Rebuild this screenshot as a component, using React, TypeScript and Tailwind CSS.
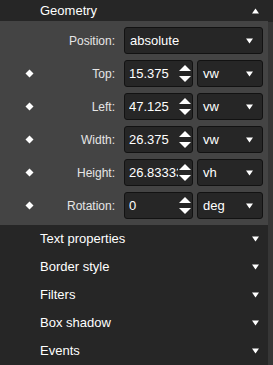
import React from "react";

const Up = () => (
  <svg width="7" height="6" viewBox="0 0 7 6">
    <path d="M3.5 0.5 L7 5.5 L0 5.5 Z" fill="#fff" />
  </svg>
);

const Down = () => (
  <svg width="7" height="6" viewBox="0 0 7 6">
    <path d="M0 0.5 L7 0.5 L3.5 5.5 Z" fill="#fff" />
  </svg>
);

const Diamond = () => (
  <svg width="9" height="9" viewBox="0 0 9 9">
    <path d="M4.5 0.5 L8.5 4.5 L4.5 8.5 L0.5 4.5 Z" fill="#fff" />
  </svg>
);

const Spin = () => (
  <div className="flex flex-col items-center gap-[5px] pr-[1px]">
    <svg width="12" height="6" viewBox="0 0 12 6">
      <path d="M6 0 L12 6 L0 6 Z" fill="#fff" />
    </svg>
    <svg width="12" height="6" viewBox="0 0 12 6">
      <path d="M0 0 L12 0 L6 6 Z" fill="#fff" />
    </svg>
  </div>
);

const boxCls =
  "h-[27px] flex items-center bg-[#262626] border border-[#121212] rounded-[3px] text-white text-[13px]";

const Select = ({ value, className }: { value: string; className: string }) => (
  <div className={`${boxCls} ${className} pl-[5px] pr-[9px] justify-between`}>
    <span>{value}</span>
    <Down />
  </div>
);

const fields = [
  { label: "Top:", value: "15.375", unit: "vw" },
  { label: "Left:", value: "47.125", unit: "vw" },
  { label: "Width:", value: "26.375", unit: "vw" },
  { label: "Height:", value: "26.83333", unit: "vh" },
  { label: "Rotation:", value: "0", unit: "deg" },
];

const sections = ["Text properties", "Border style", "Filters", "Box shadow", "Events"];

export default function App() {
  return (
    <div
      className="w-[273px] h-[365px] bg-[#262626] overflow-hidden flex"
      style={{ fontFamily: '"Liberation Sans", Arial, sans-serif' }}
    >
      <div className="w-[268px] flex flex-col">
        <div className="h-[22px] flex items-center justify-between pl-[40px] pr-[9px] pt-[1px]">
          <span className="text-white text-[13px]">Geometry</span>
          <Up />
        </div>
        <div className="bg-[#444444] flex flex-col gap-[6px] py-[6px]">
          <div className="flex items-center">
            <div className="w-[116px] text-right pr-[1px] text-[12px] text-[#e6e6e6]">Position:</div>
            <Select value="absolute" className="w-[139px] ml-[8px]" />
          </div>
          {fields.map((f) => (
            <div key={f.label} className="flex items-center">
              <div className="w-[58px] flex justify-center">
                <Diamond />
              </div>
              <div className="w-[58px] text-right pr-[1px] text-[12px] text-[#e6e6e6] whitespace-nowrap">
                {f.label}
              </div>
              <div className={`${boxCls} w-[69px] ml-[8px] pl-[4px] justify-between`}>
                <span className="whitespace-nowrap overflow-hidden w-[49px]">{f.value}</span>
                <Spin />
              </div>
              <Select value={f.unit} className="w-[66px] ml-[4px]" />
            </div>
          ))}
        </div>
        {sections.map((s) => (
          <div key={s} className="h-[28px] shrink-0 flex items-center justify-between pl-[40px] pr-[9px]">
            <span className="text-white text-[13px]">{s}</span>
            <Down />
          </div>
        ))}
      </div>
      <div className="w-[5px] mt-[22px] bg-[#363636]" />
    </div>
  );
}
